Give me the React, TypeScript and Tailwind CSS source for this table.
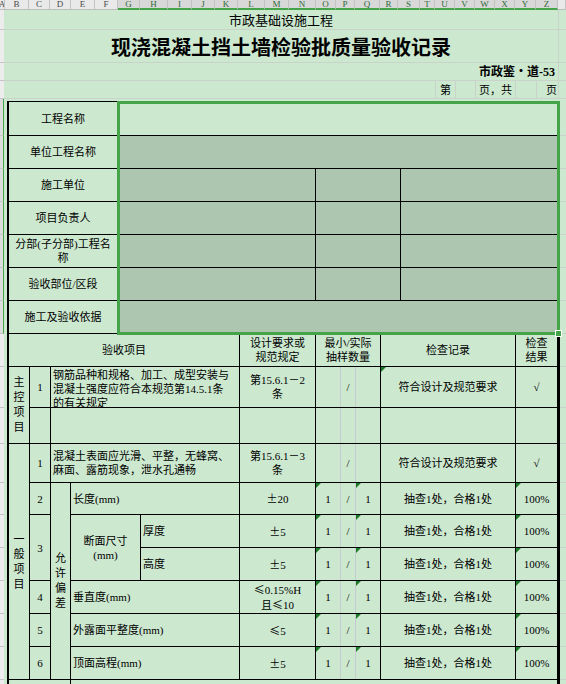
import React from "react";

const base = "flex items-center justify-center text-center overflow-hidden";
const cell = `${base} bg-[#cce8cf]`;
const darkCell = `${base} bg-[#adc6af]`;

function Tri() {
  return (
    <svg className="absolute left-0 top-0" width="5" height="5" viewBox="0 0 5 5">
      <polygon points="0,0 5,0 0,5" fill="#1d7a24" />
    </svg>
  );
}

function Sym({ c }: { c: string }) {
  return <span className="font-['Noto_Sans_CJK_SC',sans-serif]">{c}</span>;
}

function Vert({ text }: { text: string }) {
  return (
    <div className="flex flex-col items-center leading-[15px]">
      {text.split("").map((c, i) => (
        <span key={i}>{c}</span>
      ))}
    </div>
  );
}

function GHI({ vals, tri }: { vals?: [string, string, string]; tri?: boolean }) {
  return (
    <div className="bg-[#cce8cf] flex overflow-hidden">
      <div className="relative w-[24px] flex items-center justify-center">
        {tri && <Tri />}
        {vals?.[0]}
      </div>
      <div className="w-px bg-[#c7cbd1]" />
      <div className="w-[14px] flex items-center justify-center">{vals?.[1]}</div>
      <div className="w-px bg-[#c7cbd1]" />
      <div className="relative w-[24px] flex items-center justify-center">
        {tri && <Tri />}
        {vals?.[2]}
      </div>
    </div>
  );
}

const colHeaders: [string, string, boolean][] = [
  ["A", "w-[5px]", false],
  ["B", "w-[24px]", false],
  ["C", "w-[21px]", false],
  ["D", "w-[21px]", false],
  ["E", "w-[24px]", false],
  ["F", "w-[23px]", false],
  ["G", "w-[22px]", true],
  ["H", "w-[28px]", true],
  ["I", "w-[24px]", true],
  ["J", "w-[23px]", true],
  ["K", "w-[23px]", true],
  ["L", "w-[27px]", true],
  ["M", "w-[24px]", true],
  ["N", "w-[27px]", true],
  ["O", "w-[20px]", true],
  ["P", "w-[19px]", true],
  ["Q", "w-[25px]", true],
  ["R", "w-[18px]", true],
  ["S", "w-[22px]", true],
  ["T", "w-[15px]", true],
  ["U", "w-[20px]", true],
  ["V", "w-[20px]", true],
  ["W", "w-[20px]", true],
  ["X", "w-[20px]", true],
  ["Y", "w-[21px]", true],
  ["Z", "w-[22px]", true],
  ["", "w-[8px]", false],
];

const rowHeaderHeights: [string, boolean][] = [
  ["h-[20px]", false],
  ["h-[33px]", false],
  ["h-[18px]", false],
  ["h-[18px]", false],
  ["h-[37px]", true],
  ["h-[33px]", true],
  ["h-[33px]", true],
  ["h-[33px]", true],
  ["h-[33px]", true],
  ["h-[33px]", true],
  ["h-[33px]", true],
  ["h-[33px]", false],
  ["h-[41px]", false],
  ["h-[36px]", false],
  ["h-[39px]", false],
  ["h-[32px]", false],
  ["h-[33px]", false],
  ["h-[33px]", false],
  ["h-[33px]", false],
  ["h-[33px]", false],
  ["h-[33px]", false],
  ["h-[40px]", false],
];

const rightStrip = [
  "h-[35px]",
  "h-[33px]",
  "h-[33px]",
  "h-[33px]",
  "h-[33px]",
  "h-[33px]",
  "h-[33px]",
  "h-[33px]",
  "h-[41px]",
  "h-[36px]",
  "h-[39px]",
  "h-[32px]",
  "h-[33px]",
  "h-[33px]",
  "h-[33px]",
  "h-[33px]",
  "h-[33px]",
  "h-[40px]",
];

function TopBlock() {
  return (
    <div className="bg-black pl-[2px] pt-px pr-[3px] gap-px grid grid-cols-[108px_197px_84px_156px] grid-rows-[33px_32px_32px_32px_32px_32px_32px]">
      <div className={cell}>工程名称</div>
      <div className={`${cell} col-span-3`} />
      <div className={cell}>单位工程名称</div>
      <div className={`${darkCell} col-span-3`} />
      <div className={cell}>施工单位</div>
      <div className={darkCell} />
      <div className={darkCell} />
      <div className={darkCell} />
      <div className={cell}>项目负责人</div>
      <div className={darkCell} />
      <div className={darkCell} />
      <div className={darkCell} />
      <div className={cell}>
        <span>
          分部(子分部)工程名
          <br />
          称
        </span>
      </div>
      <div className={darkCell} />
      <div className={darkCell} />
      <div className={darkCell} />
      <div className={cell}>验收部位/区段</div>
      <div className={darkCell} />
      <div className={darkCell} />
      <div className={darkCell} />
      <div className={cell}>施工及验收依据</div>
      <div className={`${darkCell} col-span-3`} />
    </div>
  );
}

type Item = { b: string; label: string; spec: React.ReactNode };

function LowerTable() {
  const checkRow = (spec: React.ReactNode) => (
    <>
      <div className={cell}>{spec}</div>
      <GHI vals={["1", "/", "1"]} tri />
      <div className={cell}>抽查1处，合格1处</div>
      <div className={`${cell} relative`}>
        <Tri />
        100%
      </div>
    </>
  );
  const simpleRows: Item[] = [
    {
      b: "4",
      label: "垂直度(mm)",
      spec: (
        <span>
          <Sym c="≤" />
          0.15%H
          <br />
          且<Sym c="≤" />
          10
        </span>
      ),
    },
    { b: "5", label: "外露面平整度(mm)", spec: <span><Sym c="≤" />5</span> },
    { b: "6", label: "顶面高程(mm)", spec: <span><Sym c="±" />5</span> },
  ];
  return (
    <div className="bg-black pl-[2px] pt-px pr-[3px] gap-px grid grid-cols-[20px_20px_19px_69px_98px_75px_64px_134px_41px] grid-rows-[32px_40px_35px_38px_31px_32px_32px_32px_32px_32px_40px]">
      <div className={`${cell} col-span-5`}>验收项目</div>
      <div className={cell}>
        <span>
          设计要求或
          <br />
          规范规定
        </span>
      </div>
      <div className={cell}>
        <span>
          最小/实际
          <br />
          抽样数量
        </span>
      </div>
      <div className={cell}>检查记录</div>
      <div className={cell}>
        <span>
          检查
          <br />
          结果
        </span>
      </div>

      {/* 主控 row 1 */}
      <div className={`${cell} row-span-2`}>
        <Vert text="主控项目" />
      </div>
      <div className={cell}>1</div>
      <div className="bg-[#cce8cf] flex items-start justify-start overflow-hidden text-left pl-[2px] pt-px col-span-3">
        <span className="whitespace-nowrap">
          钢筋品种和规格、加工、成型安装与
          <br />
          混凝土强度应符合本规范第14.5.1条
          <br />
          的有关规定
        </span>
      </div>
      <div className="bg-[#cce8cf] flex items-start justify-center text-center overflow-hidden pt-[6px]">
        <span>
          第15.6.1－2
          <br />
          条
        </span>
      </div>
      <GHI vals={["", "/", ""]} />
      <div className={`${cell} relative`}>
        <Tri />
        符合设计及规范要求
      </div>
      <div className={cell}>√</div>

      {/* 主控 row 2 */}
      <div className={cell} />
      <div className={`${cell} col-span-3`} />
      <div className={cell} />
      <GHI />
      <div className={cell} />
      <div className={cell} />

      {/* 一般 row 1 */}
      <div className={`${cell} row-span-7`}>
        <Vert text="一般项目" />
      </div>
      <div className={cell}>1</div>
      <div className="bg-[#cce8cf] flex items-center justify-start overflow-hidden text-left pl-[2px] col-span-3">
        <span className="whitespace-nowrap">
          混凝土表面应光滑、平整，无蜂窝、
          <br />
          麻面、露筋现象，泄水孔通畅
        </span>
      </div>
      <div className={cell}>
        <span>
          第15.6.1－3
          <br />
          条
        </span>
      </div>
      <GHI vals={["", "/", ""]} />
      <div className={cell}>符合设计及规范要求</div>
      <div className={cell}>√</div>

      {/* 长度 */}
      <div className={cell}>2</div>
      <div className={`${cell} row-span-6`}>
        <Vert text="允许偏差" />
      </div>
      <div className="bg-[#cce8cf] flex items-center justify-start overflow-hidden pl-[2px] col-span-2">长度(mm)</div>
      {checkRow(<span><Sym c="±" />20</span>)}

      {/* 厚度 */}
      <div className={`${cell} row-span-2`}>3</div>
      <div className={`${cell} row-span-2`}>
        <span>
          断面尺寸
          <br />
          (mm)
        </span>
      </div>
      <div className="bg-[#cce8cf] flex items-center justify-start overflow-hidden pl-[2px]">厚度</div>
      {checkRow(<span><Sym c="±" />5</span>)}

      {/* 高度 */}
      <div className="bg-[#cce8cf] flex items-center justify-start overflow-hidden pl-[2px]">高度</div>
      {checkRow(<span><Sym c="±" />5</span>)}

      {simpleRows.map((r) => (
        <React.Fragment key={r.b}>
          <div className={cell}>{r.b}</div>
          <div className="bg-[#cce8cf] flex items-center justify-start overflow-hidden pl-[2px] col-span-2">{r.label}</div>
          {checkRow(r.spec)}
        </React.Fragment>
      ))}

      <div className={`${cell} col-span-3`} />
      <div className={`${cell} col-span-6`} />
    </div>
  );
}

export default function App() {
  return (
    <div className="w-[566px] h-[684px] overflow-hidden bg-[#cce8cf] text-black text-[11px] leading-[14px] font-['Liberation_Serif','Noto_Sans_CJK_SC',serif]">
      <div className="flex h-[10px]">
        {colHeaders.map(([l, w, sel], i) => (
          <div
            key={i}
            className={`${w} h-full shrink-0 overflow-hidden flex items-center justify-center border-r border-r-[#c2c2c2] text-[9px] leading-none ${
              sel
                ? "bg-[#d8d8d8] text-[#2d6a37] border-b-2 border-b-[#45a449]"
                : "bg-[#e9e9e9] text-[#4a4a4a] border-b border-b-[#bdbdbd]"
            }`}
          >
            {l}
          </div>
        ))}
      </div>

      <div className="flex">
        <div className="w-[4px] shrink-0 flex flex-col">
          {rowHeaderHeights.map(([h, sel], i) => (
            <div
              key={i}
              className={`${h} shrink-0 border-b border-b-[#c4c4c4] ${
                sel ? "bg-[#dcdcdc] border-r border-r-[#45a449]" : "bg-[#ececec]"
              }`}
            />
          ))}
        </div>

        <div className="w-[562px] flex flex-col">
          <div className="flex h-[20px] border-b border-b-[#c9d3ca]">
            <div className="w-[554px] flex items-end justify-center text-[13px] leading-[15px] pb-px">
              市政基础设施工程
            </div>
            <div className="flex-1 border-l border-l-[#c9d3ca]" />
          </div>
          <div className="flex h-[33px] border-b border-b-[#c9d3ca]">
            <div className="w-[554px] flex items-center justify-center pt-[3px] text-[20px] leading-[24px] font-bold">
              现浇混凝土挡土墙检验批质量验收记录
            </div>
            <div className="flex-1 border-l border-l-[#c9d3ca]" />
          </div>
          <div className="flex h-[18px] border-b border-b-[#c9d3ca]">
            <div className="w-[554px] flex items-center justify-end pr-[3px] text-[12px] font-bold">
              市政鉴・道-53
            </div>
            <div className="flex-1 border-l border-l-[#c9d3ca]" />
          </div>
          <div className="flex h-[18px] border-b border-b-[#c9d3ca]">
            <div className="w-[431px]" />
            <div className="w-[20px] border-l border-l-[#c9d3ca] flex items-center justify-center">第</div>
            <div className="w-[20px] border-l border-l-[#c9d3ca]" />
            <div className="w-[40px] border-l border-l-[#c9d3ca] flex items-center justify-center">页，共</div>
            <div className="w-[21px] border-l border-l-[#c9d3ca]" />
            <div className="w-[22px] border-l border-l-[#c9d3ca] flex items-center justify-end pr-px">页</div>
            <div className="flex-1 border-l border-l-[#c9d3ca]" />
          </div>
          <div className="h-[2px]" />

          <div className="flex">
            <div className="w-[3px] shrink-0" />
            <div className="w-[553px] shrink-0 relative">
              <TopBlock />
              <LowerTable />
              <div className="absolute left-[110px] top-0 w-[443px] h-[234px] border-[3px] border-[#45a449] pointer-events-none" />
              <div className="absolute left-[548px] top-[229px] w-[7px] h-[7px] bg-[#45a449] border border-white" />
            </div>
            <div className="flex-1 flex flex-col">
              {rightStrip.map((h, i) => (
                <div key={i} className={`${h} shrink-0 border-b border-b-[#c9d3ca]`} />
              ))}
            </div>
          </div>
        </div>
      </div>
    </div>
  );
}
